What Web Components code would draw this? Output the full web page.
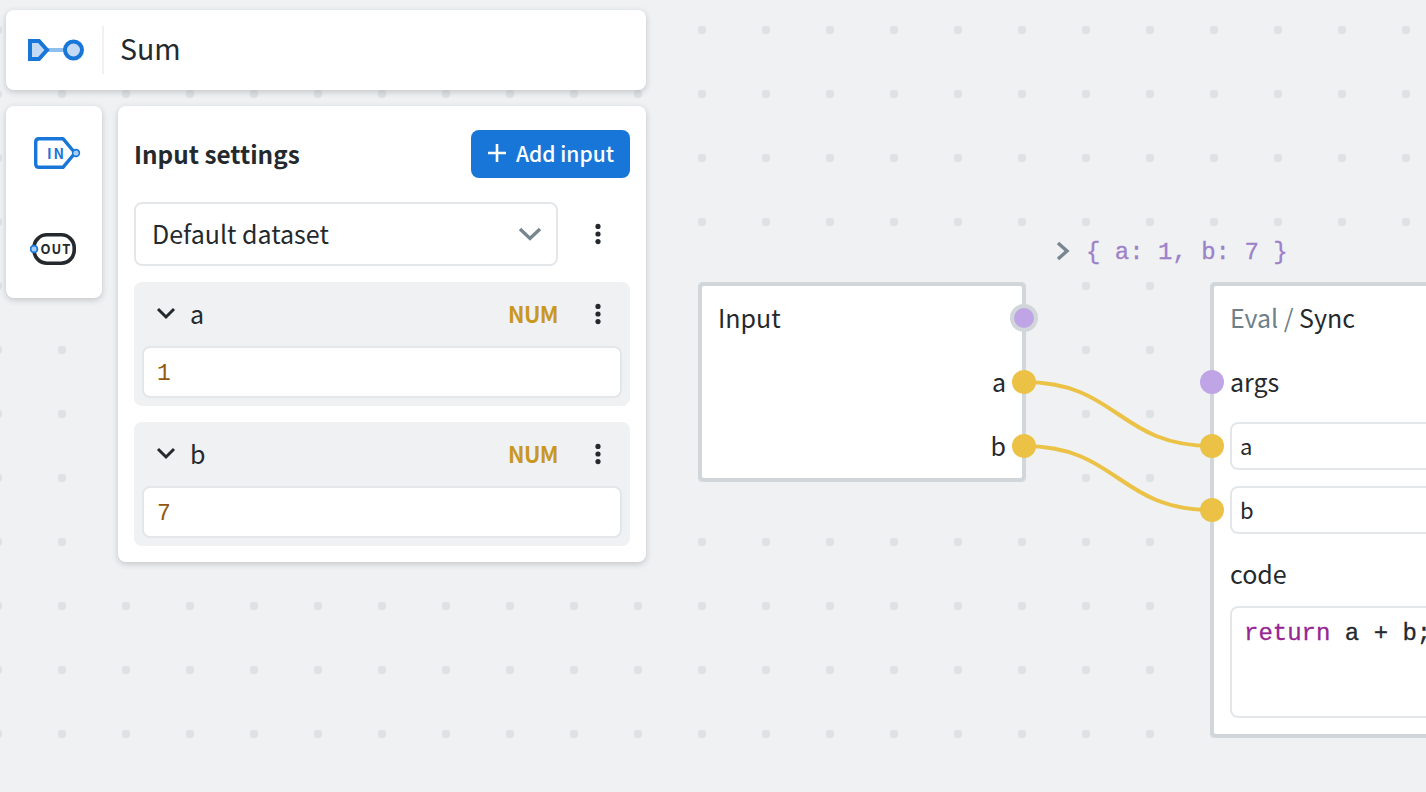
<!DOCTYPE html>
<html>
<head>
<meta charset="utf-8">
<title>Sum</title>
<style>
html, body { margin: 0; height: 100%; overflow: hidden; }
body { font-family: "Noto Sans CJK SC", "Noto Sans", sans-serif; color: #24292e; }
</style>
</head>
<body>

<template id="flow-canvas-template">
<style>
:host {
  display: block; position: relative; width: 1426px; height: 792px; overflow: hidden;
  background-color: #eff1f3;
  background-image: radial-gradient(circle at 30px 30px, #dfe2e5 4px, transparent 4.6px);
  background-size: 64px 64px;
  background-position: 32px 0;
}
.wires { position: absolute; left: 0; top: 0; width: 1426px; height: 792px; z-index: 2; pointer-events: none; }
.wires path { fill: none; stroke: #ebc246; stroke-width: 4; }
.left { position: absolute; left: 6px; top: 10px; width: 640px; z-index: 3; display: flex; flex-direction: column; gap: 16px; }
.row { display: flex; gap: 16px; align-items: flex-start; }
.result {
  position: absolute; left: 1054px; top: 236px; display: flex; align-items: center; gap: 14px;
  height: 30px;
  font: 400 24px/30px "Liberation Mono", monospace; color: #9d81c9; white-space: pre;
  -webkit-text-stroke: .3px #9d81c9;
}
.result svg { display: block; }
.result span { padding-top: 3px; }
</style>
<svg class="wires" viewBox="0 0 1426 792">
  <path d="M1024 382 C1118 382 1118 446 1212 446"/>
  <path d="M1024 446 C1118 446 1118 510 1212 510"/>
</svg>
<div class="left">
  <slot name="title"></slot>
  <div class="row">
    <slot name="tools"></slot>
    <slot name="settings"></slot>
  </div>
</div>
<div class="result">
  <svg width="18" height="20" viewBox="0 0 18 20"><path d="M4 2 L13 10 L4 18" fill="none" stroke="#78868f" stroke-width="3.4"/></svg>
  <span>{ a: 1, b: 7 }</span>
</div>
<slot></slot>
</template>

<template id="title-bar-template">
<style>
:host { display: flex; align-items: center; height: 80px; box-sizing: border-box; background: #fff; border-radius: 8px; box-shadow: 0 2px 6px rgba(36,41,46,.22); }
.logo { width: 98px; height: 48px; display: flex; align-items: center; padding-left: 22px; border-right: 2px solid #eff1f3; box-sizing: border-box; }
.name { padding-left: 16px; padding-bottom: 4px; font-size: 28.5px; line-height: 40px; }
</style>
<div class="logo">
  <svg width="56" height="22" viewBox="0 0 56 22">
    <path d="M20 11 H38" stroke="#90bfee" stroke-width="4"/>
    <path d="M2 2 H11 L19 11 L11 20 H2 Z" fill="#c4daf4" stroke="#1976d9" stroke-width="4"/>
    <circle cx="45.5" cy="11" r="8.5" fill="#c4daf4" stroke="#1976d9" stroke-width="4"/>
  </svg>
</div>
<div class="name"><slot></slot></div>
</template>

<template id="tool-box-template">
<style>
:host { display: flex; flex-direction: column; width: 96px; height: 192px; background: #fff; border-radius: 8px; box-shadow: 0 2px 6px rgba(36,41,46,.22); }
.tool { height: 96px; display: flex; align-items: center; justify-content: center; }
text { font-family: "Noto Sans CJK SC", sans-serif; font-weight: 700; font-size: 14px; letter-spacing: 2px; }
</style>
<div class="tool">
  <svg width="48" height="36" viewBox="0 0 48 36" style="margin-left:8px">
    <path d="M5 2.7 H29 L41 17 L29 31.3 H5 Q1.7 31.3 1.7 28 V6 Q1.7 2.7 5 2.7 Z" fill="#fff" stroke="#1976d9" stroke-width="3.4" stroke-linejoin="round"/>
    <text x="13" y="22.5" fill="#1976d9">IN</text>
    <circle cx="42" cy="17" r="3.4" fill="#a8cdf2" stroke="#1976d9" stroke-width="1.6"/>
  </svg>
</div>
<div class="tool">
  <svg width="48" height="36" viewBox="0 0 48 36">
    <rect x="4" y="2.8" width="40.2" height="28.4" rx="13" fill="#fff" stroke="#24292e" stroke-width="3.6"/>
    <text x="10.5" y="22" fill="#24292e" style="font-size:13px;letter-spacing:1px">OUT</text>
    <circle cx="4" cy="17" r="3.4" fill="#a8cdf2" stroke="#1976d9" stroke-width="1.8"/>
  </svg>
</div>
</template>

<template id="settings-panel-template">
<style>
:host { display: block; width: 528px; box-sizing: border-box; padding: 24px 16px 16px; background: #fff; border-radius: 8px; box-shadow: 0 2px 6px rgba(36,41,46,.22); }
.head { display: flex; align-items: center; justify-content: space-between; height: 48px; }
h2 { margin: 0; font-size: 24.3px; line-height: 48px; font-weight: 700; }
button {
  display: flex; align-items: center; gap: 9px; width: 159px; height: 48px; padding: 0 0 2px 16px; box-sizing: border-box;
  border: 0; border-radius: 8px; background: #1976d9; color: #fff; font: 500 21px/46px "Noto Sans CJK SC", sans-serif;
}
.dataset { display: flex; align-items: center; margin-top: 24px; height: 64px; }
.select {
  display: flex; align-items: center; justify-content: space-between; width: 424px; height: 64px; box-sizing: border-box;
  padding: 0 14px 0 16px; border: 2px solid #e4e7ea; border-radius: 8px; font-size: 25px; line-height: 58px;
}
.select span { padding-bottom: 2px; }
.more { flex: 1; display: flex; justify-content: center; padding-left: 8px; box-sizing: border-box; }
.list { display: flex; flex-direction: column; gap: 16px; margin-top: 16px; }
svg { display: block; }
</style>
<div class="head">
  <h2>Input settings</h2>
  <button>
    <svg width="20" height="20" viewBox="0 0 20 20"><path d="M10 1 V19 M1 10 H19" stroke="#fff" stroke-width="2.6"/></svg>
    <span>Add input</span>
  </button>
</div>
<div class="dataset">
  <div class="select">
    <span>Default dataset</span>
    <svg width="24" height="16" viewBox="0 0 24 16"><path d="M2 3 L12 12.5 L22 3" fill="none" stroke="#78868f" stroke-width="3.4"/></svg>
  </div>
  <div class="more">
    <svg width="8" height="22" viewBox="0 0 8 22"><circle cx="4" cy="3.4" r="2.6" fill="#24292e"/><circle cx="4" cy="11" r="2.6" fill="#24292e"/><circle cx="4" cy="18.6" r="2.6" fill="#24292e"/></svg>
  </div>
</div>
<div class="list"><slot></slot></div>
</template>

<template id="input-field-template">
<style>
:host { display: block; height: 124px; box-sizing: border-box; padding: 0 8px 8px; background: #eff1f3; border-radius: 8px; }
.head { display: flex; align-items: center; height: 64px; font-size: 25px; line-height: 40px; }
.head .chev { margin: 0 14px 2px 14px; }
.name { flex: 1; padding-bottom: 2px; }
.type { font-size: 22px; font-weight: 700; color: #c8981f; margin-right: 36px; padding-bottom: 2px; letter-spacing: -.6px; }
.more { margin-right: 20px; }
.value {
  height: 52px; box-sizing: border-box; padding: 0 13px; background: #fff; border: 2px solid #e4e7ea; border-radius: 8px;
  font: 400 23px/52px "Liberation Mono", monospace; color: #8f5a10;
}
svg { display: block; }
</style>
<div class="head">
  <svg class="chev" width="20" height="14" viewBox="0 0 20 14"><path d="M2 3 L10 11 L18 3" fill="none" stroke="#24292e" stroke-width="3"/></svg>
  <span class="name"></span>
  <span class="type">NUM</span>
  <svg class="more" width="8" height="22" viewBox="0 0 8 22"><circle cx="4" cy="3.4" r="2.6" fill="#24292e"/><circle cx="4" cy="11" r="2.6" fill="#24292e"/><circle cx="4" cy="18.6" r="2.6" fill="#24292e"/></svg>
</div>
<div class="value"><slot></slot></div>
</template>

<template id="flow-node-template">
<style>
:host {
  display: block; position: absolute; box-sizing: border-box; z-index: 1;
  left: var(--x); top: var(--y); width: var(--w); height: var(--h);
  background: #fff; border: 4px solid #d1d6da; border-radius: 6px;
}
.body { display: flex; flex-direction: column; padding: 0 16px; }
</style>
<div class="body"><slot></slot></div>
</template>

<template id="node-row-template">
<style>
:host { display: flex; align-items: center; position: relative; height: 64px; margin: 0 -16px; padding: 0 16px 2px; font-size: 25px; line-height: 40px; box-sizing: border-box; }
:host([align="end"]) { justify-content: flex-end; }
.port { position: absolute; top: 50%; width: 24px; height: 24px; margin-top: -12px; border-radius: 50%; z-index: 3; background: var(--port, #ebc246); }
:host([side="out"]) .port { right: -14px; }
:host([side="in"]) .port { left: -14px; }
:host([ring]) .port { box-shadow: 0 0 0 4px #d1d6da; width: 20px; height: 20px; margin-top: -10px; }
:host([ring][side="out"]) .port { right: -12px; }
:host([field]) { padding-bottom: 0; }
</style>
<span class="port"></span>
<slot></slot>
</template>

<template id="node-field-template">
<style>
:host { display: block; flex: 1; height: 48px; box-sizing: border-box; padding: 0 8px; border: 2px solid #e4e7ea; border-radius: 8px; background: #fff; font-size: 22px; line-height: 42px; }
</style>
<slot></slot>
</template>

<template id="code-box-template">
<style>
:host { display: block; height: 112px; box-sizing: border-box; padding: 13px 12px; border: 2px solid #e4e7ea; border-radius: 8px; background: #fff; font: 400 24px/26px "Liberation Mono", monospace; color: #24292e; -webkit-text-stroke: .3px; }
.code { white-space: pre; }
::slotted(b) { font-weight: 400; color: #972694; }
</style>
<div class="code"><slot></slot></div>
</template>

<flow-canvas>
  <title-bar slot="title">Sum</title-bar>
  <tool-box slot="tools"></tool-box>
  <settings-panel slot="settings">
    <input-field name="a">1</input-field>
    <input-field name="b">7</input-field>
  </settings-panel>

  <flow-node style="--x:698px;--y:282px;--w:328px;--h:200px">
    <node-row side="out" ring style="--port:#bfa5e5"><span>Input</span></node-row>
    <node-row side="out" align="end">a</node-row>
    <node-row side="out" align="end">b</node-row>
  </flow-node>

  <flow-node style="--x:1210px;--y:282px;--w:400px;--h:456px">
    <node-row><span><span style="color:#6f7f89">Eval / </span>Sync</span></node-row>
    <node-row side="in" style="--port:#bfa5e5">args</node-row>
    <node-row side="in" field><node-field>a</node-field></node-row>
    <node-row side="in" field><node-field>b</node-field></node-row>
    <node-row>code</node-row>
    <code-box><b>return</b> a + b;</code-box>
  </flow-node>
</flow-canvas>

<script>
function shadowFrom(el, id) {
  const root = el.attachShadow({ mode: 'open' });
  root.appendChild(document.getElementById(id).content.cloneNode(true));
  return root;
}

class SimpleElement extends HTMLElement {
  constructor() {
    super();
    shadowFrom(this, this.constructor.templateId);
  }
}

class FlowCanvas extends SimpleElement { static get templateId() { return 'flow-canvas-template'; } }
class TitleBar extends SimpleElement { static get templateId() { return 'title-bar-template'; } }
class ToolBox extends SimpleElement { static get templateId() { return 'tool-box-template'; } }
class SettingsPanel extends SimpleElement { static get templateId() { return 'settings-panel-template'; } }
class FlowNode extends SimpleElement { static get templateId() { return 'flow-node-template'; } }
class NodeRow extends SimpleElement {
  static get templateId() { return 'node-row-template'; }
  connectedCallback() {
    // rows without a side have no port
    if (!this.hasAttribute('side')) this.shadowRoot.querySelector('.port').remove();
  }
}
class NodeField extends SimpleElement { static get templateId() { return 'node-field-template'; } }
class CodeBox extends SimpleElement { static get templateId() { return 'code-box-template'; } }

class InputField extends SimpleElement {
  static get templateId() { return 'input-field-template'; }
  connectedCallback() {
    this.shadowRoot.querySelector('.name').textContent = this.getAttribute('name');
  }
}

customElements.define('flow-canvas', FlowCanvas);
customElements.define('title-bar', TitleBar);
customElements.define('tool-box', ToolBox);
customElements.define('settings-panel', SettingsPanel);
customElements.define('input-field', InputField);
customElements.define('flow-node', FlowNode);
customElements.define('node-row', NodeRow);
customElements.define('node-field', NodeField);
customElements.define('code-box', CodeBox);
</script>
</body>
</html>
